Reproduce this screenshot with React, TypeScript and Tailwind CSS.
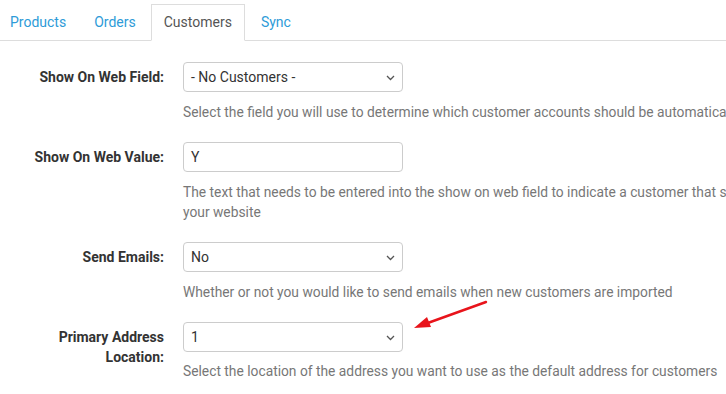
import React from "react";

function Chevron() {
  return (
    <svg width="9" height="6" viewBox="0 0 9 6" className="absolute right-[7px] top-[12px]">
      <path d="M1 1 L4.5 4.5 L8 1" fill="none" stroke="#555" strokeWidth="1.3" />
    </svg>
  );
}

function SelectBox({ value }: { value: string }) {
  return (
    <div className="relative w-[220px] h-[30px] border border-[#cccccc] rounded-[4px] bg-white flex items-center pl-[7px] text-[14px] text-[#333]">
      {value}
      <Chevron />
    </div>
  );
}

function InputBox({ value }: { value: string }) {
  return (
    <div className="w-[220px] h-[30px] border border-[#cccccc] rounded-[4px] bg-white flex items-center pl-[7px] text-[14px] text-[#333]">
      {value}
    </div>
  );
}

function Row({ label, children, help }: { label: React.ReactNode; children: React.ReactNode; help: React.ReactNode }) {
  return (
    <div className="flex mb-[20px]">
      <div className="w-[164px] shrink-0 text-right pt-[5px] text-[14px] font-bold leading-[20px] text-[#333]">{label}</div>
      <div className="ml-[19px] flex flex-col">
        {children}
        <div className="mt-[10px] text-[13.8px] leading-[20px] text-[#777] whitespace-nowrap">{help}</div>
      </div>
    </div>
  );
}

export default function App() {
  return (
    <div className="w-[726px] h-[394px] overflow-hidden bg-white relative" style={{ fontFamily: "Roboto, 'Liberation Sans', sans-serif" }}>
      <div className="pt-[4px] flex border-b border-[#dddddd] h-[41px]">
        <div className="pl-[10px] pr-[13px] mr-[2px] h-[37px] flex items-center text-[14px] text-[#2e9bd8]">Products</div>
        <div className="px-[13px] mr-[2px] h-[37px] flex items-center text-[14px] text-[#2e9bd8]">Orders</div>
        <div className="px-[12px] mr-[2px] h-[37px] flex items-center text-[14px] text-[#555] bg-white border border-[#dddddd] border-b-white">Customers</div>
        <div className="px-[14px] h-[37px] flex items-center text-[14px] text-[#2e9bd8]">Sync</div>
      </div>
      <div className="pt-[21px]">
        <Row label="Show On Web Field:" help="Select the field you will use to determine which customer accounts should be automatically displayed on your website">
          <SelectBox value="- No Customers -" />
        </Row>
        <Row
          label="Show On Web Value:"
          help={
            <>
              The text that needs to be entered into the show on web field to indicate a customer that should be displayed on
              <br />
              your website
            </>
          }
        >
          <InputBox value="Y" />
        </Row>
        <Row label="Send Emails:" help="Whether or not you would like to send emails when new customers are imported">
          <SelectBox value="No" />
        </Row>
        <Row
          label={
            <>
              Primary Address
              <br />
              Location:
            </>
          }
          help="Select the location of the address you want to use as the default address for customers"
        >
          <div className="-mb-[1px]">
            <SelectBox value="1" />
          </div>
        </Row>
      </div>
      <svg className="absolute left-[405px] top-[295px]" width="90" height="40" viewBox="0 0 90 40">
        <line x1="81" y1="7" x2="20" y2="29" stroke="#e8141b" strokeWidth="2.4" strokeLinecap="round" />
        <polygon points="9,33 22,22 26,32" fill="#e8141b" />
      </svg>
    </div>
  );
}
